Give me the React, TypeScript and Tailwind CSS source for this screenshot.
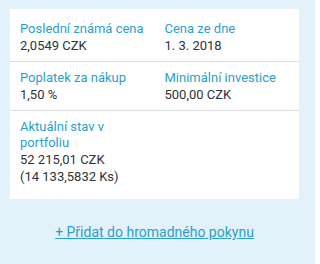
import React from "react";

interface InfoCellProps {
  label: string;
  lines: string[];
  last?: boolean;
}

function InfoCell({ label, lines, last }: InfoCellProps) {
  return (
    <div className={`px-[10px] pt-[8px] pb-[7px] ${last ? "" : "border-b border-[#dcdcdc]"}`}>
      <div className="text-[13px] leading-[16px] text-[#2a9fcb]">{label}</div>
      {lines.map((line) => (
        <div key={line} className="text-[13px] leading-[17px] text-[#333333]">
          {line}
        </div>
      ))}
    </div>
  );
}

export default function App() {
  return (
    <div
      className="h-[264px] w-[315px] bg-[#e3f1fb] pl-[10px] pr-[16px] pt-[9px]"
      style={{ fontFamily: "Roboto, 'Liberation Sans', sans-serif" }}
    >
      <div className="bg-white pt-[4px] pb-[7px]">
        <div className="grid grid-cols-2">
          <InfoCell label="Poslední známá cena" lines={["2,0549 CZK"]} />
          <InfoCell label="Cena ze dne" lines={["1. 3. 2018"]} />
          <InfoCell label="Poplatek za nákup" lines={["1,50 %"]} />
          <InfoCell label="Minimální investice" lines={["500,00 CZK"]} />
          <InfoCell
            label="Aktuální stav v portfoliu"
            lines={["52 215,01 CZK", "(14 133,5832 Ks)"]}
            last
          />
        </div>
      </div>
      <div className="mt-[21px] text-center">
        <a href="#" className="text-[14px] leading-[18px] text-[#2a9fcb] underline">
          + Přidat do hromadného pokynu
        </a>
      </div>
    </div>
  );
}
